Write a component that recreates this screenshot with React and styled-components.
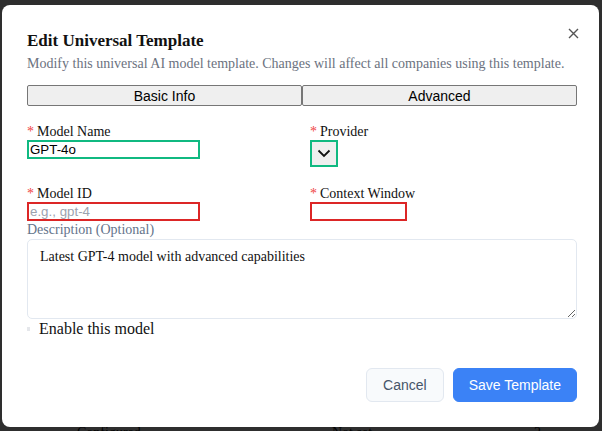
import React from 'react'
import styled, { createGlobalStyle } from 'styled-components'

const Global = createGlobalStyle`
  html, body {
    margin: 0;
    padding: 0;
    background: #ffffff;
    font-family: "Liberation Serif", "Times New Roman", serif;
  }
`

// Page behind the modal
const Page = styled.div`
  height: 431px;
  overflow: hidden;
  display: flex;
  flex-direction: column;
  justify-content: flex-end;
`

const BackRow = styled.div`
  display: grid;
  grid-template-columns: 255px 202px 1fr;
  padding: 0 0 0 77px;
  height: 6px;
  font-family: "Liberation Serif", serif;
  font-size: 14px;
  line-height: 16px;
  color: #111;
`

const Overlay = styled.div`
  position: fixed;
  inset: 0;
  background: rgba(0, 0, 0, 0.82);
  display: flex;
  align-items: flex-start;
  padding: 5px 3px 0 2px;
`

const Dialog = styled.div`
  position: relative;
  box-sizing: border-box;
  width: 597px;
  height: 422px;
  background: #fff;
  border-radius: 8px;
  padding: 25px 22px 0 25px;
  display: flex;
  flex-direction: column;
`

const CloseButton = styled.button`
  position: absolute;
  top: 18px;
  right: 16px;
  width: 20px;
  height: 20px;
  padding: 0;
  border: none;
  background: transparent;
  display: flex;
  align-items: center;
  justify-content: center;
  color: #555;
`

const Title = styled.h2`
  margin: 0;
  font-size: 17px;
  font-weight: bold;
  line-height: 21px;
  color: #111;
`

const Subtitle = styled.p`
  margin: 4px 0 0;
  font-size: 14px;
  line-height: 17px;
  color: #6b7280;
`

const Tabs = styled.div`
  display: grid;
  grid-template-columns: 1fr 1fr;
  margin-top: 13px;
`

const Tab = styled.button`
  box-sizing: border-box;
  height: 21px;
  padding: 0;
  border: 1px solid #767676;
  border-radius: 2px;
  background: #efefef;
  font-family: "Liberation Sans", Arial, sans-serif;
  font-size: 14px;
  color: #000;
`

const Grid = styled.div`
  display: grid;
  grid-template-columns: 1fr 1fr;
  column-gap: 16px;
  row-gap: 18px;
  margin-top: 17px;
`

const Field = styled.div`
  display: flex;
  flex-direction: column;
  align-items: flex-start;
`

const Label = styled.label`
  font-size: 14px;
  line-height: 17px;
  color: ${p => (p.muted ? '#64748b' : '#111')};
`

const Star = styled.span`
  color: #ef4444;
  margin-right: 3px;
`

const TextInput = styled.input`
  box-sizing: border-box;
  width: ${p => p.w}px;
  height: 19px;
  padding: 0 1px;
  border: 2px solid ${p => (p.invalid ? '#dc2626' : '#10b981')};
  outline: none;
  font-family: "Liberation Sans", Arial, sans-serif;
  font-size: 13.33px;
  color: #000;
  &::placeholder {
    color: #9ca3af;
  }
`

const SelectBox = styled.div`
  box-sizing: border-box;
  width: 28px;
  height: 27px;
  border: 2px solid #10b981;
  background: #efefef;
  display: flex;
  align-items: center;
  justify-content: center;
`

const DescLabel = styled(Label)`
  margin-top: 1px;
  line-height: 16px;
`

const TextArea = styled.textarea`
  box-sizing: border-box;
  width: 100%;
  height: 80px;
  margin-top: 1px;
  padding: 8px 12px;
  border: 1px solid #e2e8f0;
  border-radius: 5px;
  font-family: "Liberation Serif", serif;
  font-size: 14px;
  line-height: 17px;
  color: #111;
  resize: vertical;
  outline: none;
`

const CheckRow = styled.label`
  display: flex;
  align-items: center;
  gap: 9px;
  margin-top: 1px;
  font-size: 16px;
  line-height: 18px;
  color: #111;
`

const TinyCheck = styled.span`
  width: 3px;
  height: 4px;
  background: #e5e7eb;
`

const Footer = styled.div`
  display: flex;
  justify-content: flex-end;
  gap: 9px;
  margin-top: 30px;
`

const ActionButton = styled.button`
  box-sizing: border-box;
  height: 34px;
  padding: 0 ${p => (p.primary ? '15px' : '16px')};
  border-radius: 6px;
  border: 1px solid ${p => (p.primary ? '#3b82f6' : '#e2e8f0')};
  background: ${p => (p.primary ? '#3b82f6' : '#f8fafc')};
  color: ${p => (p.primary ? '#fff' : '#475569')};
  font-family: "Liberation Sans", Arial, sans-serif;
  font-size: 14px;
`

const App = () => (
  <>
    <Global />
    <Page>
      <BackRow>
        <span>Configured</span>
        <span>Not set</span>
        <span>2 configured</span>
      </BackRow>
    </Page>
    <Overlay>
      <Dialog>
        <CloseButton aria-label="Close">
          <svg width="11" height="11" viewBox="0 0 11 11" fill="none" stroke="currentColor" strokeWidth="1.4">
            <path d="M1 1l9 9M10 1l-9 9" />
          </svg>
        </CloseButton>
        <Title>Edit Universal Template</Title>
        <Subtitle>
          Modify this universal AI model template. Changes will affect all companies using this template.
        </Subtitle>
        <Tabs>
          <Tab>Basic Info</Tab>
          <Tab>Advanced</Tab>
        </Tabs>
        <Grid>
          <Field>
            <Label><Star>*</Star>Model Name</Label>
            <TextInput w={173} defaultValue="GPT-4o" />
          </Field>
          <Field>
            <Label><Star>*</Star>Provider</Label>
            <SelectBox>
              <svg width="14" height="9" viewBox="0 0 14 9" fill="none" stroke="#111" strokeWidth="1.8">
                <path d="M1.5 1.5l5.5 5.5 5.5-5.5" />
              </svg>
            </SelectBox>
          </Field>
          <Field>
            <Label><Star>*</Star>Model ID</Label>
            <TextInput w={173} invalid placeholder="e.g., gpt-4" />
          </Field>
          <Field>
            <Label><Star>*</Star>Context Window</Label>
            <TextInput w={97} invalid />
          </Field>
        </Grid>
        <DescLabel muted>Description (Optional)</DescLabel>
        <TextArea defaultValue="Latest GPT-4 model with advanced capabilities" />
        <CheckRow>
          <TinyCheck />
          Enable this model
        </CheckRow>
        <Footer>
          <ActionButton>Cancel</ActionButton>
          <ActionButton primary>Save Template</ActionButton>
        </Footer>
      </Dialog>
    </Overlay>
  </>
)

export default App
